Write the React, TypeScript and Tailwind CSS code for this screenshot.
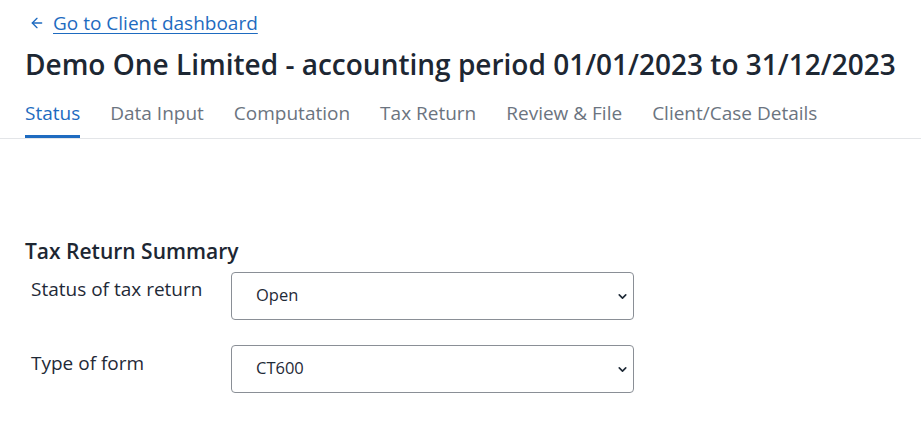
import { ArrowLeft, ChevronDown } from "lucide-react";

const tabs = [
  "Status",
  "Data Input",
  "Computation",
  "Tax Return",
  "Review & File",
  "Client/Case Details",
];

function SelectBox({ value }: { value: string }) {
  return (
    <div className="relative w-[403px]">
      <select
        defaultValue={value}
        className="h-[48px] w-full appearance-none rounded-[4px] border border-[#8a8f96] bg-white pl-[24px] text-[16.5px] text-[#1f2a37] outline-none"
      >
        <option>{value}</option>
      </select>
      <ChevronDown
        size={13}
        strokeWidth={3}
        className="pointer-events-none absolute right-[5px] top-[18px] text-[#1f2a37]"
      />
    </div>
  );
}

export default function App() {
  return (
    <div className="min-h-screen bg-white font-['Open_Sans',sans-serif] text-[#1f2a37]">
      <div className="px-[25px] pt-[9px]">
        <a
          href="#"
          className="flex items-center gap-[8px] text-[19px] text-[#1e6bc0]"
        >
          <ArrowLeft size={16} strokeWidth={2} className="ml-[4px]" />
          <span className="underline underline-offset-[3px]">
            Go to Client dashboard
          </span>
        </a>
        <h1 className="mt-[6px] text-[28px] font-semibold leading-[40px] text-[#1d2733]">
          Demo One Limited - accounting period 01/01/2023 to 31/12/2023
        </h1>
      </div>

      <div className="mt-[17px] border-b border-[#e3e5e8] px-[25px]">
        <nav className="flex gap-[30px]">
          {tabs.map((t, i) => (
            <div
              key={t}
              className={
                i === 0
                  ? "border-b-[3px] border-[#1e6bc0] pb-[10px] text-[19px] leading-[24px] text-[#1e6bc0]"
                  : "border-b-[3px] border-transparent pb-[10px] text-[19px] leading-[24px] text-[#6b7480]"
              }
            >
              {t}
            </div>
          ))}
        </nav>
      </div>

      <div className="px-[25px] pt-[98px]">
        <h2 className="text-[21px] font-semibold leading-[28px] text-[#1d2733]">
          Tax Return Summary
        </h2>
        <div className="mt-[7px] flex flex-col gap-[25px]">
          <div className="flex items-start">
            <label className="w-[206px] pl-[6px] pt-[5px] text-[19px] leading-[24px]">
              Status of tax return
            </label>
            <SelectBox value="Open" />
          </div>
          <div className="flex items-start">
            <label className="w-[206px] pl-[6px] pt-[6px] text-[19px] leading-[24px]">
              Type of form
            </label>
            <SelectBox value="CT600" />
          </div>
        </div>
      </div>
    </div>
  );
}
